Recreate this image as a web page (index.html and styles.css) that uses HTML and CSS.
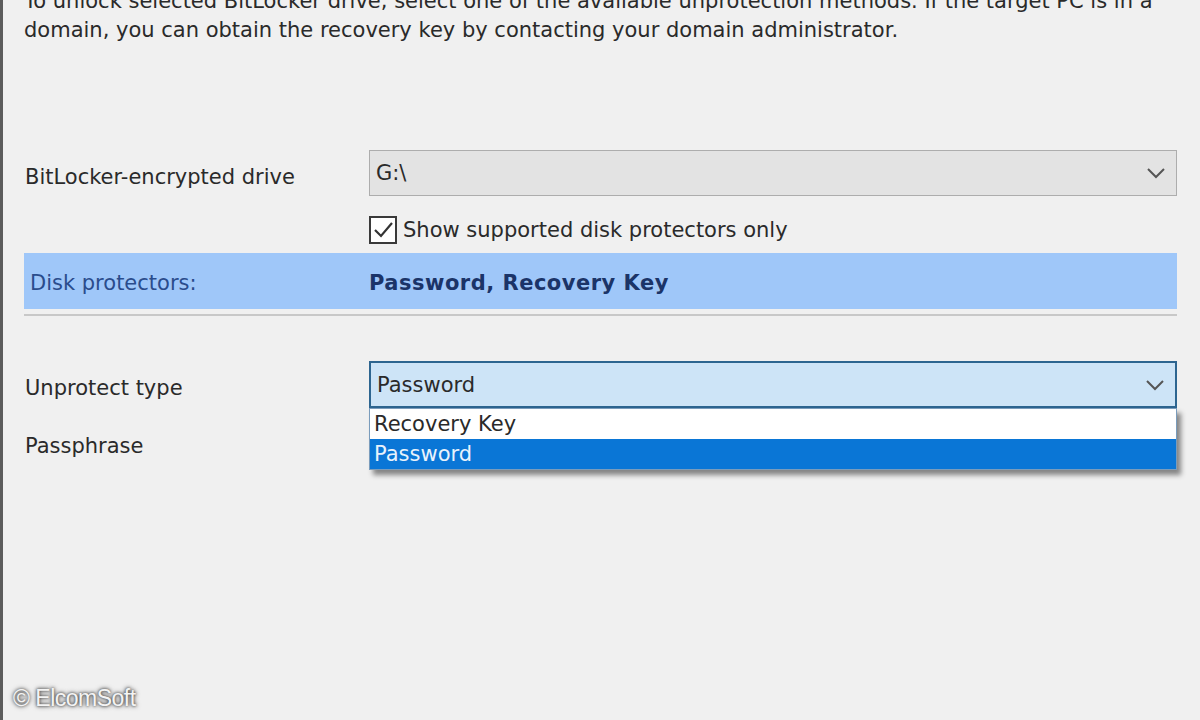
FILE: index.html
```html
<!DOCTYPE html>
<html>
<head>
<meta charset="utf-8">
<link rel="stylesheet" href="styles.css">
</head>
<body>
<div class="panel">
  <p class="intro">To unlock selected BitLocker drive, select one of the available unprotection methods. If the target PC is in a domain, you can obtain the recovery key by contacting your domain administrator.</p>

  <div class="row row-drive">
    <div class="label">BitLocker-encrypted drive</div>
    <div class="combo combo-grey">
      <span class="combo-text">G:\</span>
      <svg class="chev" width="20" height="12" viewBox="0 0 20 12"><path d="M2 2 L10 10 L18 2" fill="none" stroke="#555" stroke-width="2"/></svg>
    </div>
  </div>

  <div class="row row-check">
    <div class="label"></div>
    <label class="check">
      <span class="box"><svg width="24" height="24" viewBox="0 0 24 24"><path d="M4 12 L10 18 L21 5" fill="none" stroke="#333" stroke-width="2.2"/></svg></span>
      <span>Show supported disk protectors only</span>
    </label>
  </div>

  <div class="band">
    <div class="label band-label">Disk protectors:</div>
    <div class="band-value">Password, Recovery Key</div>
  </div>
  <div class="sep"></div>

  <div class="row row-type">
    <div class="label">Unprotect type</div>
    <div class="combo-wrap">
      <div class="combo combo-focus">
        <span class="combo-text">Password</span>
        <svg class="chev" width="20" height="12" viewBox="0 0 20 12"><path d="M2 2 L10 10 L18 2" fill="none" stroke="#555" stroke-width="2"/></svg>
      </div>
      <ul class="list">
        <li>Recovery Key</li>
        <li class="sel">Password</li>
      </ul>
    </div>
  </div>

  <div class="row row-pass">
    <div class="label">Passphrase</div>
  </div>

  <div class="watermark">© ElcomSoft</div>
</div>
</body>
</html>
```

FILE: styles.css
```css
* { box-sizing: border-box; }
html, body { margin: 0; padding: 0; background: #f0f0f0; }
body {
  width: 1200px;
  height: 720px;
  overflow: hidden;
  font-family: "DejaVu Sans", Tahoma, sans-serif;
  font-size: 21px;
  color: #2a2a2a;
}
.panel {
  position: relative;
  height: 720px;
  overflow: hidden;
  border-left: 3px solid #5c5c5c;
  padding: 0 23px 0 21px;
}
.intro {
  margin: -13px 0 0 0;
  line-height: 29px;
  width: 1145px;
}
.row {
  display: flex;
  align-items: center;
}
.label {
  width: 345px;
  flex: none;
  padding-left: 1px;
}
.row-drive { margin-top: 105px; }
.row-drive .label { padding-top: 8px; }
.combo {
  flex: 1;
  display: flex;
  align-items: center;
  justify-content: space-between;
  height: 46px;
  padding: 0 10px 0 6px;
  border: 1.5px solid #adadad;
}
.combo-grey { background: #e3e3e3; }
.row-check { margin-top: 20px; height: 28px; }
.check {
  display: flex;
  align-items: center;
  gap: 6px;
}
.box {
  width: 28px;
  height: 28px;
  border: 2px solid #3a3a3a;
  background: #fff;
  display: flex;
  align-items: center;
  justify-content: center;
}
.band {
  margin-top: 9px;
  height: 56px;
  background: #9fc7f9;
  display: flex;
  align-items: center;
}
.band-label { padding-left: 6px; padding-top: 3px; color: #2a4c8c; }
.band-value { font-weight: bold; color: #1b3468; letter-spacing: 0.5px; padding-top: 3px; }
.sep {
  margin-top: 5px;
  height: 2px;
  background: #c8c8c8;
}
.row-type { margin-top: 45px; }
.row-type .label { padding-top: 7px; }
.combo-wrap { flex: 1; position: relative; }
.combo-focus {
  background: #cde4f7;
  border: 2px solid #2d6590;
  height: 47px;
}
.list {
  position: absolute;
  left: 0;
  right: 0;
  top: 47px;
  margin: 0;
  padding: 0;
  list-style: none;
  background: #fff;
  border: 1px solid #7a9cbc;
  box-shadow: 4px 5px 5px rgba(0,0,0,0.45);
  z-index: 2;
}
.list li {
  height: 30px;
  line-height: 30px;
  padding-left: 4px;
}
.list li.sel {
  background: #0a76d6;
  color: #e8f2fc;
}
.row-pass { margin-top: 26px; }
.watermark {
  position: absolute;
  left: 10px;
  bottom: 8px;
  font-family: "Liberation Sans", Arial, sans-serif;
  font-size: 23px;
  color: #f4f4f4;
  letter-spacing: -0.5px;
  text-shadow: 0 0 3px #333, 0 0 5px #555;
}
```
